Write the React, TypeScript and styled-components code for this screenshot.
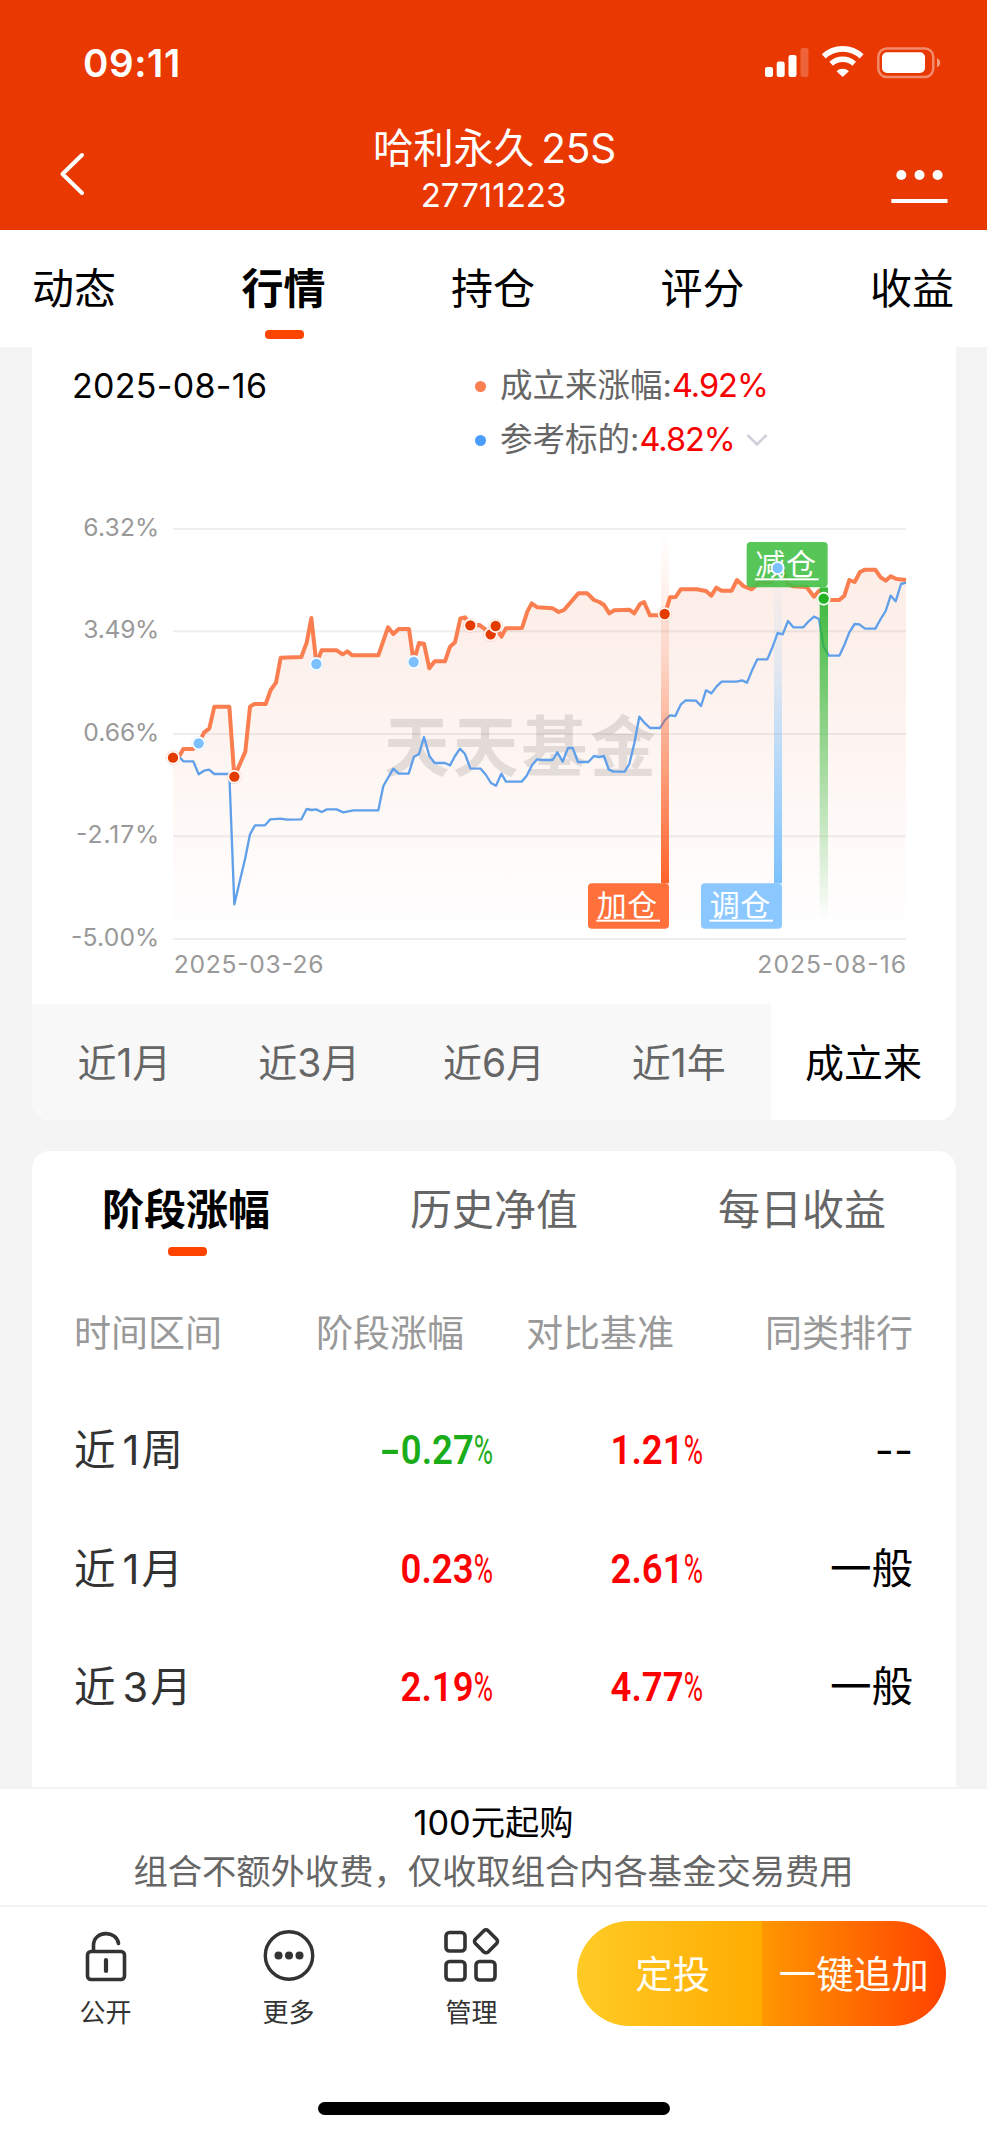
import React from "react";
import styled, { createGlobalStyle } from "styled-components";

const GlobalStyle = createGlobalStyle`
  * { box-sizing: border-box; }
  html, body { margin: 0; padding: 0; background: #fff; }
  body { font-family: Inter, "Noto Sans CJK SC", sans-serif; color: #000; }
`;

const Screen = styled.div`
  width: 987px;
  height: 2136px;
  display: flex;
  flex-direction: column;
  background: #f4f4f4;
  overflow: hidden;
  white-space: nowrap;
`;

/* ---------- header ---------- */

const Header = styled.header`
  flex: none;
  height: 230px;
  background: #e93802;
  color: #fff;
`;

const StatusBar = styled.div`
  height: 126px;
  padding: 0 45px 0 83px;
  display: flex;
  align-items: center;
  justify-content: space-between;
`;

const Clock = styled.span`
  font-size: 38.5px;
  font-weight: 600;
  line-height: 48px;
  letter-spacing: 0.6px;
`;

const StatusIcons = styled.svg`
  width: 178px;
  height: 36px;
`;

const NavBar = styled.div`
  display: grid;
  grid-template-columns: 200px 1fr 200px;
  height: 104px;
`;

const BackIcon = styled.svg`
  margin: 25px 0 0 58px;
  width: 30px;
  height: 46px;
`;

const TitleBlock = styled.div`
  display: flex;
  flex-direction: column;
  align-items: center;
`;

const Title = styled.h1`
  margin: 0;
  padding-left: 2px;
  font-size: 40.5px;
  font-weight: 400;
  line-height: 46px;
  word-spacing: -4px;
  letter-spacing: -0.2px;
`;

const Code = styled.div`
  margin-top: 3px;
  font-size: 33px;
  line-height: 40px;
`;

const MenuIcon = styled.svg`
  justify-self: end;
  margin: 40px 39px 0 0;
  width: 58px;
  height: 40px;
`;

/* ---------- top tabs ---------- */

const TopTabs = styled.nav`
  flex: none;
  height: 117px;
  padding: 0 33px 0 32px;
  display: flex;
  justify-content: space-between;
  background: #fff;
`;

const Tab = styled.div<{ $active?: boolean; $muted?: boolean }>`
  display: flex;
  flex-direction: column;
  align-items: center;
  font-size: 42px;
  line-height: 60px;
  font-weight: ${(p) => (p.$active ? 700 : 400)};
  color: ${(p) => (p.$muted ? "#666" : "#000")};
`;

const TopTab = styled(Tab)`
  padding-top: 29px;
`;

const TabMark = styled.i<{ $gap: number }>`
  margin-top: ${(p) => p.$gap}px;
  margin-left: 3px;
  width: 39px;
  height: 9px;
  border-radius: 4px;
  background: #ff4400;
`;

/* ---------- cards ---------- */

const Content = styled.main`
  flex: none;
  height: 1440px;
  padding: 0 31px 0 32px;
  display: flex;
  flex-direction: column;
  overflow: hidden;
`;

const ChartCard = styled.section`
  flex: none;
  height: 773px;
  border-radius: 0 0 18px 18px;
  background: #fff;
  overflow: hidden;
`;

const Summary = styled.div`
  height: 153px;
  padding: 12px 0 0 40px;
  display: grid;
  grid-template-columns: 403px 1fr;
`;

const DateText = styled.div`
  font-size: 34px;
  line-height: 54px;
  letter-spacing: 0.3px;
`;

const LegendRow = styled.div`
  height: 54px;
  display: flex;
  align-items: center;
  font-size: 32.5px;
  line-height: 54px;
  color: #666;
`;

const LegendDot = styled.i<{ $color: string }>`
  width: 11px;
  height: 11px;
  margin-right: 14px;
  border-radius: 50%;
  background: ${(p) => p.$color};
`;

const LegendValue = styled.span`
  color: #f80000;
  letter-spacing: -1px;
`;

const ChevronDown = styled.svg`
  margin-left: 11px;
  width: 22px;
  height: 14px;
`;

const Chart = styled.svg`
  display: block;
  width: 924px;
  height: 500px;
  font-family: Inter, "Noto Sans CJK SC", sans-serif;
`;

const RangeBar = styled.div`
  margin-top: 4px;
  height: 116px;
  display: grid;
  grid-template-columns: repeat(5, 1fr);
`;

const RangeItem = styled.div<{ $active?: boolean }>`
  font-size: 39px;
  line-height: 117px;
  text-align: center;
  color: ${(p) => (p.$active ? "#000" : "#666")};
  background: ${(p) => (p.$active ? "#fff" : "#f8f8f8")};
`;

const StageCard = styled.section`
  flex: none;
  margin-top: 31px;
  height: 640px;
  border-radius: 18px 18px 0 0;
  background: #fff;
`;

const StageTabs = styled.div`
  height: 123px;
  display: grid;
  grid-template-columns: repeat(3, 1fr);
`;

const StageTab = styled(Tab)`
  padding-top: 29px;
`;

const TableHead = styled.div`
  height: 117px;
  padding: 0 43px 0 42px;
  display: grid;
  grid-template-columns: 180px 210px 210px 1fr;
  font-size: 37px;
  line-height: 119px;
  color: #999;
`;

const HeadCell = styled.span<{ $left?: boolean }>`
  text-align: ${(p) => (p.$left ? "left" : "right")};
`;

const TableRow = styled.div`
  height: 118.5px;
  padding: 0 43px 0 42px;
  display: grid;
  grid-template-columns: 208px 211px 210px 1fr;
  align-items: center;
  font-size: 41.5px;
  line-height: 60px;
`;

const Period = styled.span`
  color: #333;
`;

const PeriodNumber = styled.span`
  margin: 0 2px 0 7px;
`;

const Percent = styled.span<{ $down?: boolean }>`
  justify-self: end;
  font-family: Roboto, sans-serif;
  font-size: 41.5px;
  font-weight: 600;
  color: ${(p) => (p.$down ? "#1aad19" : "#ff0000")};
  transform: scaleX(0.88);
  transform-origin: right center;
`;

const MinusSign = styled.span`
  display: inline-block;
  transform: scaleX(1.6);
  transform-origin: right center;
`;

const PercentSign = styled.span`
  display: inline-block;
  width: 22px;
  font-weight: 400;
  transform: scaleX(0.72);
  transform-origin: left center;
`;

const Rank = styled.span`
  text-align: right;
`;

/* ---------- footer ---------- */

const Notice = styled.div`
  flex: none;
  height: 120px;
  padding-top: 10px;
  border-top: 2px solid #f3f3f3;
  border-bottom: 2px solid #f3f3f3;
  background: #fff;
  text-align: center;
  font-size: 34.3px;
  line-height: 47px;
`;

const NoticeSub = styled.div`
  margin-top: 2px;
  color: #666;
`;

const ActionBar = styled.div`
  flex: none;
  height: 195px;
  padding: 14px 41px 0 14px;
  display: flex;
  background: #fff;
`;

const IconAction = styled.div`
  width: 183px;
  padding-top: 4px;
  display: flex;
  flex-direction: column;
  align-items: center;
  font-size: 26px;
  line-height: 36px;
  color: #333;
  svg {
    width: 60px;
    height: 60px;
    margin-bottom: 10px;
  }
`;

const ButtonPair = styled.div`
  margin-left: auto;
  width: 369px;
  height: 105px;
  display: flex;
  border-radius: 53px;
  overflow: hidden;
`;

const BuyButton = styled.button<{ $from: string; $to: string; $inset?: number }>`
  flex: none;
  width: 50%;
  padding: 0 0 4px ${(p) => p.$inset ?? 0}px;
  border: 0;
  font: inherit;
  font-size: 37.5px;
  color: #fffdf4;
  background: linear-gradient(90deg, ${(p) => p.$from}, ${(p) => p.$to});
`;

const HomeArea = styled.div`
  flex: 1;
  display: flex;
  justify-content: center;
  background: #fff;
`;

const HomeIndicator = styled.i`
  width: 352px;
  height: 13px;
  border-radius: 7px;
  background: #000;
`;

/* ---------- chart data (plot units) ---------- */

const fundLine =
  "423,773 444,765 454,747 484,747 500,730 516,698 532,685 547,620 592,620 607,830 640,755 654,620 667,612 701,612 716,570 732,548 746,473 808,471 824,428 838,354 853,490 869,451 914,451 932,463 946,454 961,466 1039,466 1068,382 1084,402 1100,387 1131,387 1145,486 1161,429 1176,431 1192,505 1208,484 1239,484 1254,440 1269,427 1285,355 1299,352 1315,376 1342,375 1356,385 1376,403 1391,378 1408,410 1422,385 1470,384 1486,335 1499,310 1516,322 1562,325 1580,336 1596,330 1639,280 1666,280 1686,300 1702,306 1716,315 1732,340 1747,331 1792,329 1807,340 1824,312 1836,306 1854,346 1898,346 1914,292 1931,291 1946,268 1994,268 2022,273 2038,287 2053,263 2069,272 2099,272 2115,240 2134,258 2159,268 2179,250 2219,245 2237,204 2254,215 2267,252 2284,259 2324,261 2346,290 2361,272 2375,296 2392,300 2422,300 2437,287 2452,240 2468,246 2484,216 2499,209 2530,209 2546,232 2561,242 2576,229 2594,237 2622,240";

const benchmarkLine =
  "423,773 442,770 454,784 484,784 500,823 516,812 531,809 547,822 592,822 607,1213 640,1073 654,1003 669,976 699,976 715,958 746,956 764,959 808,958 824,927 839,930 852,928 869,936 885,928 914,928 934,937 964,931 1039,931 1054,858 1084,806 1100,821 1130,821 1146,770 1161,762 1176,711 1192,768 1208,789 1239,789 1254,796 1269,768 1284,746 1299,762 1315,805 1346,806 1362,825 1377,849 1392,857 1408,821 1422,845 1469,845 1484,827 1500,796 1515,778 1530,780 1562,780 1576,757 1592,785 1608,744 1622,744 1638,786 1669,786 1686,768 1702,771 1716,768 1730,808 1744,815 1778,815 1792,792 1807,730 1822,650 1836,667 1854,684 1884,684 1899,660 1914,646 1930,648 1946,614 1961,601 1992,602 2007,618 2022,571 2038,580 2054,559 2069,545 2114,545 2130,541 2145,548 2161,509 2176,478 2206,478 2222,440 2237,399 2252,403 2268,363 2284,382 2314,382 2330,364 2346,350 2361,357 2375,440 2391,467 2422,467 2437,435 2452,397 2468,372 2482,373 2499,386 2530,386 2546,357 2561,333 2576,287 2591,304 2607,252 2622,248";

const gridRows = [
  { y: 87, label: "6.32%", width: 228 },
  { y: 394, label: "3.49%", width: 228 },
  { y: 702, label: "0.66%", width: 228 },
  { y: 1009, label: "-2.17%", width: 250 },
  { y: 1317, label: "-5.00%", width: 265 },
];

const RED = "#e43c00";
const BLUE = "#7cc1fd";
const GREEN = "#22b223";

const markers = [
  { x: 423, y: 773, color: RED },
  { x: 500, y: 730, color: BLUE },
  { x: 607, y: 830, color: RED },
  { x: 853, y: 492, color: BLUE },
  { x: 1145, y: 486, color: BLUE },
  { x: 1315, y: 376, color: RED },
  { x: 1376, y: 403, color: RED },
  { x: 1391, y: 378, color: RED },
  { x: 1898, y: 342, color: RED },
  { x: 2237, y: 204, color: BLUE },
  { x: 2375, y: 296, color: GREEN },
];

const flags = [
  { x: 1668, y: 1150, color: "#ff6d36", text: "加仓", opacity: 0.98 },
  { x: 2007, y: 1150, color: "#85c5ff", text: "调仓", opacity: 0.95 },
  { x: 2144, y: 126, color: "#45c046", text: "减仓", opacity: 0.9 },
];

function PerformanceChart() {
  return (
    <Chart viewBox="0 0 2772 1500">
      <defs>
        <linearGradient id="area" gradientUnits="userSpaceOnUse" x1="0" y1="204" x2="0" y2="1317">
          <stop offset="0" stopColor="#e8602f" stopOpacity="0.115" />
          <stop offset="0.35" stopColor="#e8602f" stopOpacity="0.08" />
          <stop offset="1" stopColor="#e8602f" stopOpacity="0" />
        </linearGradient>
        <linearGradient id="addBar" x1="0" y1="0" x2="0" y2="1">
          <stop offset="0" stopColor="#ff5a1f" stopOpacity="0" />
          <stop offset="0.35" stopColor="#ff5a1f" stopOpacity="0.17" />
          <stop offset="1" stopColor="#ff5a1f" stopOpacity="0.95" />
        </linearGradient>
        <linearGradient id="moveBar" x1="0" y1="0" x2="0" y2="1">
          <stop offset="0" stopColor="#7cc1fd" stopOpacity="0" />
          <stop offset="0.3" stopColor="#7cc1fd" stopOpacity="0.18" />
          <stop offset="1" stopColor="#7cc1fd" />
        </linearGradient>
        <linearGradient id="cutBar" x1="0" y1="0" x2="0" y2="1">
          <stop offset="0" stopColor="#2fb630" stopOpacity="0.95" />
          <stop offset="0.15" stopColor="#2fb630" stopOpacity="0.8" />
          <stop offset="1" stopColor="#2fb630" stopOpacity="0" />
        </linearGradient>
      </defs>

      {gridRows.map((row) => (
        <g key={row.label}>
          <rect x="423" y={row.y - 3} width="2199" height="6" fill="#eeeeee" />
          <text x="382" y={row.y + 20} textAnchor="end" fontSize="74" fill="#999" textLength={row.width}>
            {row.label}
          </text>
        </g>
      ))}

      <polygon points={`423,1317 ${fundLine} 2622,1317`} fill="url(#area)" />
      <text x="1056" y="813" fontSize="197" fontWeight="700" fill="#000" opacity="0.1" textLength="816">
        天天基金
      </text>
      <polyline points={benchmarkLine} fill="none" stroke="#609fea" strokeWidth="7" strokeLinejoin="round" />
      <polyline points={fundLine} fill="none" stroke="#fa7e50" strokeWidth="12" strokeLinejoin="round" />

      <rect x="1887" y="100" width="24" height="1050" fill="url(#addBar)" />
      <rect x="2226" y="204" width="24" height="946" fill="url(#moveBar)" />
      <rect x="2363" y="262" width="25" height="1000" fill="url(#cutBar)" />

      {flags.map((flag) => (
        <g key={flag.text}>
          <rect x={flag.x} y={flag.y} width="243" height="136" rx="12" fill={flag.color} fillOpacity={flag.opacity} />
          <text x={flag.x + 26} y={flag.y + 98} fontSize="90" fill="#fff" textLength="182">
            {flag.text}
          </text>
          <rect x={flag.x + 25} y={flag.y + 109} width="191" height="6" fill="#fff" />
        </g>
      ))}

      {markers.map((m) => (
        <g key={m.x}>
          <circle cx={m.x} cy={m.y} r="21" fill="#fff" stroke={m.color} strokeOpacity="0.25" strokeWidth="2" />
          <circle cx={m.x} cy={m.y} r="15.500" fill={m.color} />
        </g>
      ))}

      <text x="425" y="1420" fontSize="74" fill="#999" textLength="450">
        2025-03-26
      </text>
      <text x="2176" y="1420" fontSize="74" fill="#999" textLength="446">
        2025-08-16
      </text>
    </Chart>
  );
}

const stageRows = [
  { number: "1", unit: "周", change: "-0.27", base: "1.21", rank: "--" },
  { number: "1", unit: "月", change: "0.23", base: "2.61", rank: "一般" },
  { number: "3", unit: "月", change: "2.19", base: "4.77", rank: "一般" },
];

function PercentValue({ value }: { value: string }) {
  const down = value.startsWith("-");
  return (
    <Percent $down={down}>
      {down && <MinusSign>-</MinusSign>}
      {value.replace("-", "")}
      <PercentSign>%</PercentSign>
    </Percent>
  );
}

export default function App() {
  return (
    <>
      <GlobalStyle />
      <Screen>
        <Header>
          <StatusBar>
            <Clock>09:11</Clock>
            <StatusIcons viewBox="0 0 178 36">
              <g fill="#fff">
                <rect x="1" y="22" width="8" height="10" rx="2.2" />
                <rect x="12.700" y="16.500" width="8" height="15.500" rx="2.200" />
                <rect x="24.500" y="10" width="8" height="22" rx="2.200" />
                <rect x="36.500" y="3" width="8" height="29" rx="2.200" opacity="0.22" />
                <path d="M78.700 32 L72.500 26.200 A9 9 0 0 1 84.900 26.200 Z" />
                <rect x="118" y="7.300" width="43" height="20.700" rx="5" />
                <path d="M173 13.200 a4.800 4.800 0 0 1 0 9 z" opacity="0.5" />
              </g>
              <g fill="none" stroke="#fff">
                <path d="M59.800 11.400 A27.500 27.500 0 0 1 97.600 11.400" strokeWidth="5.800" />
                <path d="M67.200 18.800 A17 17 0 0 1 90.200 18.800" strokeWidth="5.400" />
                <rect x="114.300" y="3.500" width="55" height="28.500" rx="8.500" strokeWidth="2.500" opacity="0.42" />
              </g>
            </StatusIcons>
          </StatusBar>
          <NavBar>
            <BackIcon viewBox="0 0 30 46" fill="none" stroke="#fff" strokeWidth="4" strokeLinecap="round" strokeLinejoin="round">
              <path d="M24 4 L4.500 23 L24 42" />
            </BackIcon>
            <TitleBlock>
              <Title>哈利永久 25S</Title>
              <Code>27711223</Code>
            </TitleBlock>
            <MenuIcon viewBox="0 0 58 40" fill="#fff">
              <circle cx="11.300" cy="9" r="5" />
              <circle cx="29.500" cy="9" r="5" />
              <circle cx="47.600" cy="9" r="5" />
              <rect x="1.300" y="33" width="56.200" height="4" />
            </MenuIcon>
          </NavBar>
        </Header>

        <TopTabs>
          <TopTab>动态</TopTab>
          <TopTab $active>
            行情
            <TabMark $gap={11} />
          </TopTab>
          <TopTab>持仓</TopTab>
          <TopTab>评分</TopTab>
          <TopTab>收益</TopTab>
        </TopTabs>

        <Content>
          <ChartCard>
            <Summary>
              <DateText>2025-08-16</DateText>
              <div>
                <LegendRow>
                  <LegendDot $color="#fb7f50" />
                  成立来涨幅:<LegendValue>4.92%</LegendValue>
                </LegendRow>
                <LegendRow>
                  <LegendDot $color="#4c9dfb" />
                  参考标的:<LegendValue>4.82%</LegendValue>
                  <ChevronDown viewBox="0 0 22 14" fill="none" stroke="#cfcfdb" strokeWidth="2.500">
                    <path d="M1.500 2 L11 11.500 L20.500 2" />
                  </ChevronDown>
                </LegendRow>
              </div>
            </Summary>
            <PerformanceChart />
            <RangeBar>
              <RangeItem>近1月</RangeItem>
              <RangeItem>近3月</RangeItem>
              <RangeItem>近6月</RangeItem>
              <RangeItem>近1年</RangeItem>
              <RangeItem $active>成立来</RangeItem>
            </RangeBar>
          </ChartCard>

          <StageCard>
            <StageTabs>
              <StageTab $active>
                阶段涨幅
                <TabMark $gap={7} />
              </StageTab>
              <StageTab $muted>历史净值</StageTab>
              <StageTab $muted>每日收益</StageTab>
            </StageTabs>
            <TableHead>
              <HeadCell $left>时间区间</HeadCell>
              <HeadCell>阶段涨幅</HeadCell>
              <HeadCell>对比基准</HeadCell>
              <HeadCell>同类排行</HeadCell>
            </TableHead>
            {stageRows.map((row) => (
              <TableRow key={row.number + row.unit}>
                <Period>
                  近<PeriodNumber>{row.number}</PeriodNumber>
                  {row.unit}
                </Period>
                <PercentValue value={row.change} />
                <PercentValue value={row.base} />
                <Rank>{row.rank}</Rank>
              </TableRow>
            ))}
          </StageCard>
        </Content>

        <Notice>
          <div>100元起购</div>
          <NoticeSub>组合不额外收费，仅收取组合内各基金交易费用</NoticeSub>
        </Notice>

        <ActionBar>
          <IconAction>
            <svg viewBox="0 0 60 60" fill="none" stroke="#333" strokeWidth="3.600" strokeLinecap="round">
              <rect x="11.500" y="26.500" width="37" height="28" rx="3.500" />
              <path d="M17.500 26 V20.500 C17.500 5 41 5 42.500 18.500" />
              <path d="M30 35 V46" strokeWidth="4.200" />
            </svg>
            公开
          </IconAction>
          <IconAction>
            <svg viewBox="0 0 60 60" fill="none" stroke="#333" strokeWidth="3.400">
              <circle cx="30" cy="30.500" r="23.700" />
              <g fill="#333" stroke="none">
                <circle cx="19.500" cy="30.500" r="4" />
                <circle cx="30" cy="30.500" r="4" />
                <circle cx="40.500" cy="30.500" r="4" />
              </g>
            </svg>
            更多
          </IconAction>
          <IconAction>
            <svg viewBox="0 0 60 60" fill="none" stroke="#333" strokeWidth="3.600">
              <rect x="4" y="7.500" width="19" height="18.500" rx="3.500" />
              <rect x="4" y="36.500" width="19" height="18.500" rx="3.500" />
              <rect x="34" y="36.500" width="19" height="18.500" rx="3.500" />
              <rect x="35" y="7.300" width="18" height="18" rx="3" transform="rotate(45 44 16.300)" />
            </svg>
            管理
          </IconAction>
          <ButtonPair>
            <BuyButton $from="#ffcb26" $to="#ffab00" $inset={7}>
              定投
            </BuyButton>
            <BuyButton $from="#ff9700" $to="#ff4200">
              一键追加
            </BuyButton>
          </ButtonPair>
        </ActionBar>

        <HomeArea>
          <HomeIndicator />
        </HomeArea>
      </Screen>
    </>
  );
}
